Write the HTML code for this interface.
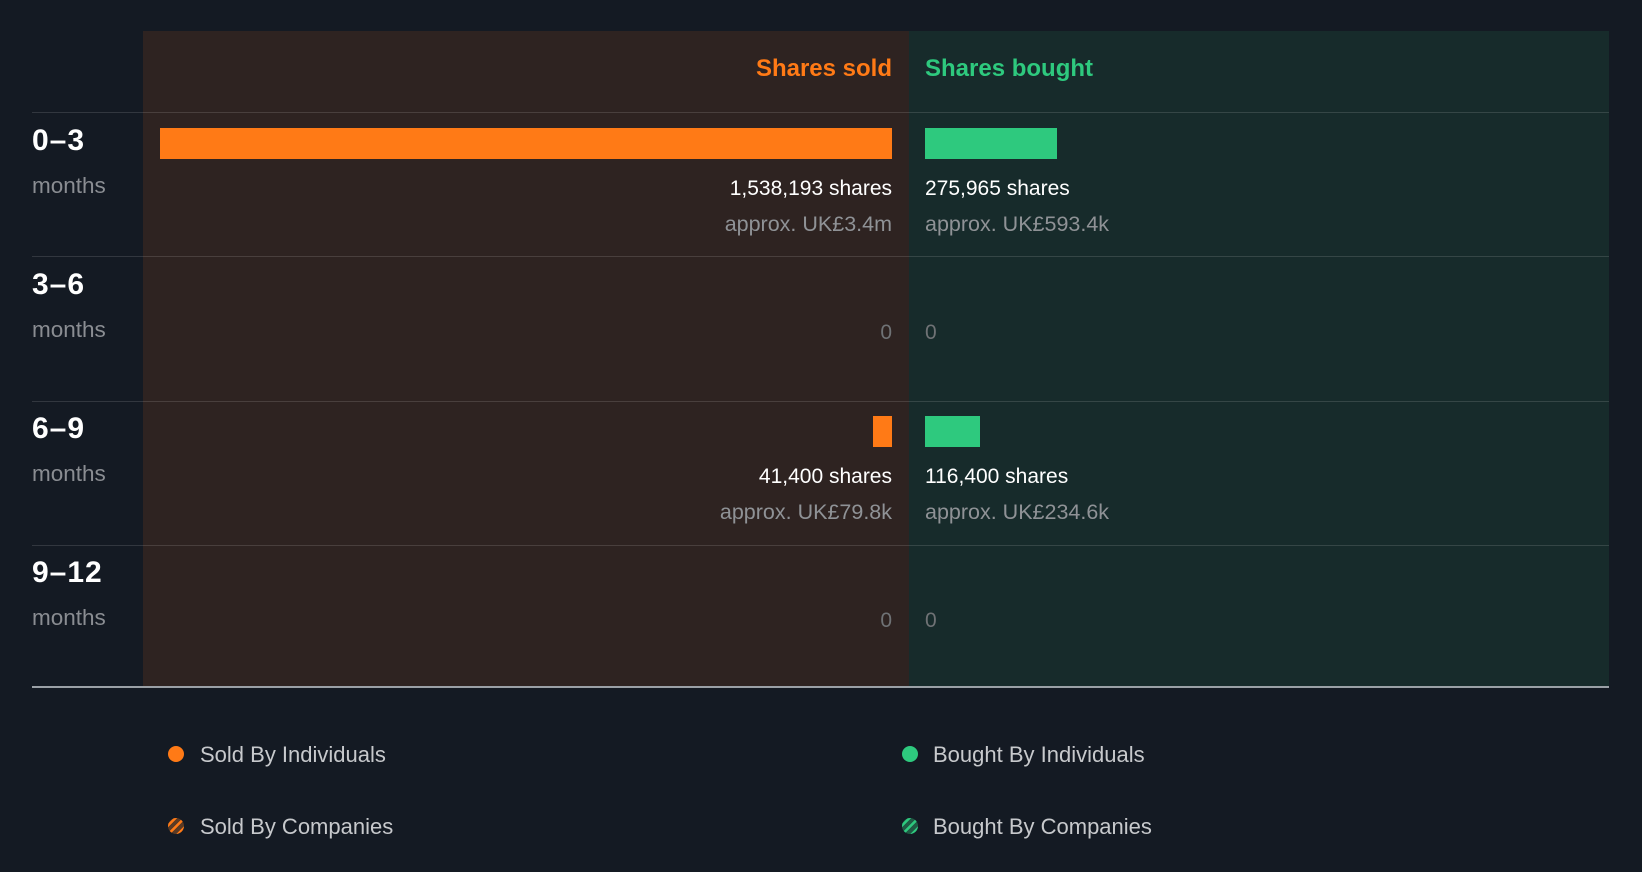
<!DOCTYPE html>
<html><head><meta charset="utf-8"><style>
*{margin:0;padding:0;box-sizing:border-box}
body{width:1642px;height:872px;background:#141a23;font-family:"Liberation Sans",sans-serif;position:relative;overflow:hidden}
div,span{position:absolute}
.sold{left:143px;width:766px;top:31px;height:656px;background:#2e2321}
.bought{left:909px;width:700px;top:31px;height:656px;background:#172b2b}
.line{left:32px;width:1577px;height:1px;background:rgba(255,255,255,0.13)}
.t{white-space:nowrap;line-height:1}
.r{text-align:right;right:750px}
.l{left:925px}
.w{color:#fff;font-size:21px}
.g{color:#8f9296;font-size:21.5px}
.z{color:#6f7275;font-size:21px}
.lab{left:32px;color:#fff;font-weight:bold;font-size:30px;letter-spacing:1px}
.mo{left:32px;color:#8a8d92;font-size:22.5px}
.leg{color:#c7c9cc;font-size:22px}
.dot{width:16px;height:16px;border-radius:50%}
</style></head><body>
<div class="sold"></div><div class="bought"></div>
<div class="t r" style="top:57px;color:#ff7a16;font-weight:bold;font-size:24px">Shares sold</div>
<div class="t l" style="top:57px;color:#2ec97e;font-weight:bold;font-size:24px">Shares bought</div>
<div class="line" style="top:112px"></div>
<div class="line" style="top:256px"></div>
<div class="line" style="top:401px"></div>
<div class="line" style="top:545px"></div>
<div class="line" style="top:686px;height:2px;background:#9aa0a6"></div>

<div class="t lab" style="top:126px">0–3</div><div class="t mo" style="top:175px">months</div>
<div class="t lab" style="top:270px">3–6</div><div class="t mo" style="top:319px">months</div>
<div class="t lab" style="top:414px">6–9</div><div class="t mo" style="top:463px">months</div>
<div class="t lab" style="top:558px">9–12</div><div class="t mo" style="top:607px">months</div>

<div style="left:160px;width:732px;top:128px;height:31px;background:#ff7a16"></div>
<div style="left:925px;width:132px;top:128px;height:31px;background:#2ec97e"></div>
<div class="t r w" style="top:178px">1,538,193 shares</div>
<div class="t l w" style="top:178px">275,965 shares</div>
<div class="t r g" style="top:214px">approx. UK£3.4m</div>
<div class="t l g" style="top:214px">approx. UK£593.4k</div>

<div class="t r z" style="top:322px">0</div>
<div class="t l z" style="top:322px">0</div>

<div style="left:873px;width:19px;top:416px;height:31px;background:#ff7a16"></div>
<div style="left:925px;width:55px;top:416px;height:31px;background:#2ec97e"></div>
<div class="t r w" style="top:466px">41,400 shares</div>
<div class="t l w" style="top:466px">116,400 shares</div>
<div class="t r g" style="top:502px">approx. UK£79.8k</div>
<div class="t l g" style="top:502px">approx. UK£234.6k</div>

<div class="t r z" style="top:610px">0</div>
<div class="t l z" style="top:610px">0</div>

<div class="dot" style="left:168px;top:746px;background:#ff7a16"></div>
<div class="t leg" style="left:200px;top:744px">Sold By Individuals</div>
<div class="dot" style="left:168px;top:818px;background:repeating-linear-gradient(135deg,#5a3a24 0 4px,#ff7a16 4px 6.5px)"></div>
<div class="t leg" style="left:200px;top:816px">Sold By Companies</div>
<div class="dot" style="left:902px;top:746px;background:#2ec97e"></div>
<div class="t leg" style="left:933px;top:744px">Bought By Individuals</div>
<div class="dot" style="left:902px;top:818px;background:repeating-linear-gradient(135deg,#1f5a44 0 4px,#2ec97e 4px 6.5px)"></div>
<div class="t leg" style="left:933px;top:816px">Bought By Companies</div>
</body></html>
